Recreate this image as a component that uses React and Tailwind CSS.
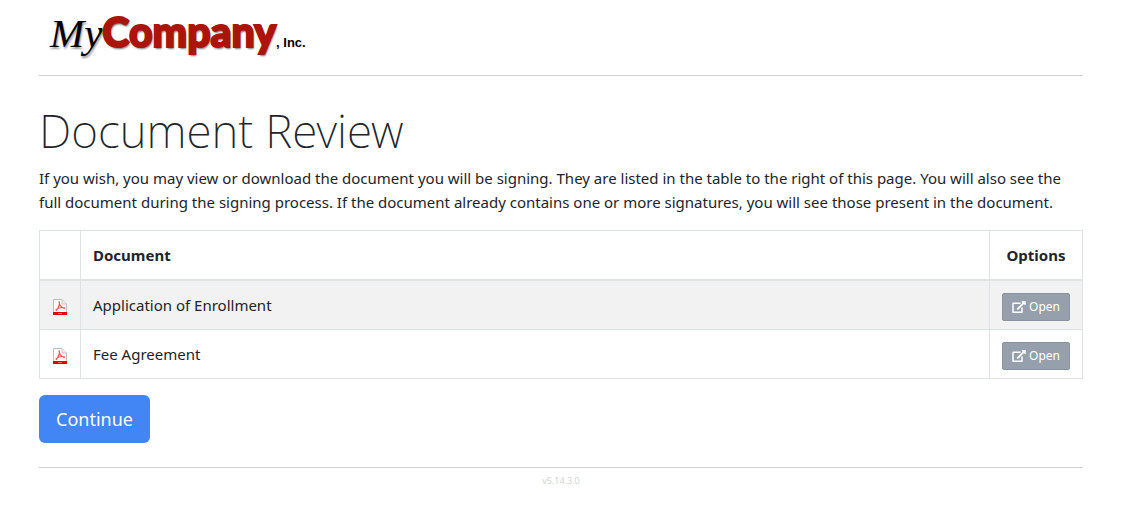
const documents = ['Application of Enrollment', 'Fee Agreement'];

function Logo() {
  return (
    <div className="flex h-12 items-baseline pl-[11px] leading-[48px]">
      <span className="font-['Liberation_Serif',serif] text-[41px] italic text-black [text-shadow:1px_2px_2px_#999]">My</span>
      <span className="font-['Lato',sans-serif] text-[41px] font-black text-[#aa1409] [-webkit-text-stroke:2px_#aa1409] [text-shadow:1px_2px_2px_#777]">Company</span>
      <span className="font-['Liberation_Sans',sans-serif] text-[13px] font-bold text-black">, Inc.</span>
    </div>
  );
}

function PdfIcon() {
  return (
    <svg className="block h-4 w-4" viewBox="0 0 16 16" aria-hidden="true">
      <path d="M1.500 .5h8.500l4.500 4.500v10.500h-13z" fill="#fff" stroke="#bdbdbd" />
      <path d="M10 .5v4.500h4.500" fill="#eee" stroke="#c6c6c6" />
      <path d="M7.100 2.500C8.300 5 7 8 4 11.800M7.100 2.500C6.500 5 9 8.500 12.800 9.700M3.500 11.200C5.500 9 9.500 8 13 9" fill="none" stroke="#f0594e" strokeWidth="1.200" />
      <path d="M1 13h14v3H1z" fill="#e60000" />
      <path d="M6 14.500h4" stroke="#f56a6a" />
    </svg>
  );
}

function OpenIcon() {
  return (
    <svg className="h-3 w-3.5" viewBox="0 0 576 512" fill="currentColor" aria-hidden="true">
      <path d="M576 24v127.984c0 21.461-25.960 31.980-40.971 16.971l-35.707-35.709-243.523 243.523c-9.373 9.373-24.568 9.373-33.941 0l-22.627-22.627c-9.373-9.373-9.373-24.569 0-33.941L442.756 76.676l-35.703-35.705C391.982 25.900 402.656 0 424.024 0H552c13.255 0 24 10.745 24 24zM407.029 270.794l-16 16A23.999 23.999 0 0 0 384 303.765V448H64V128h264a24.003 24.003 0 0 0 16.970-7.029l16-16C376.089 89.851 365.381 64 344 64H48C21.490 64 0 85.490 0 112v352c0 26.510 21.490 48 48 48h352c26.510 0 48-21.490 48-48V287.764c0-21.382-25.852-32.090-40.971-16.970z" />
    </svg>
  );
}

export default function App() {
  return (
    <div className="px-[39px] pb-6 font-['Noto_Sans',sans-serif] text-[15px] leading-6 text-[#212529]">
      <header className="border-b border-[#d0d0d0] pt-2 pb-[19px]">
        <Logo />
      </header>
      <main>
        <h1 className="mt-[26px] mb-2 text-[46px] leading-[56px] font-extralight">Document Review</h1>
        <p className="mb-4">
          If you wish, you may view or download the document you will be signing. They are listed in the table to the right of this page. You will also see the full document during the signing process. If the document already contains one or more signatures, you will see those present in the document.
        </p>
        <table className="w-full border-collapse border border-[#dee2e6]">
          <thead>
            <tr className="border-b-2 border-[#dee2e6]">
              <th className="w-[41px] border-r border-[#dee2e6]" aria-label="Type" />
              <th className="border-r border-[#dee2e6] p-3 text-left font-bold">Document</th>
              <th className="w-[93px] p-3 text-center font-bold">Options</th>
            </tr>
          </thead>
          <tbody>
            {documents.map((name) => (
              <tr key={name} className="h-[49px] border-b border-[#dee2e6] odd:bg-[#f2f2f2]">
                <td className="border-r border-[#dee2e6] px-3 pt-1"><PdfIcon /></td>
                <td className="border-r border-[#dee2e6] px-3">{name}</td>
                <td className="px-3 pt-1">
                  <button className="flex h-7 w-full items-center justify-center gap-[3px] rounded-xs border border-[#87939f] bg-[#95a0ac] text-xs text-white">
                    <OpenIcon />Open
                  </button>
                </td>
              </tr>
            ))}
          </tbody>
        </table>
        <button className="mt-4 h-12 rounded-md bg-[#4285f4] px-[17px] text-lg text-white">Continue</button>
      </main>
      <footer className="mt-6 border-t border-[#d0d0d0] pt-1 text-center text-[9px] leading-[18px] text-[#d3d3d3]">v5.14.3.0</footer>
    </div>
  );
}
